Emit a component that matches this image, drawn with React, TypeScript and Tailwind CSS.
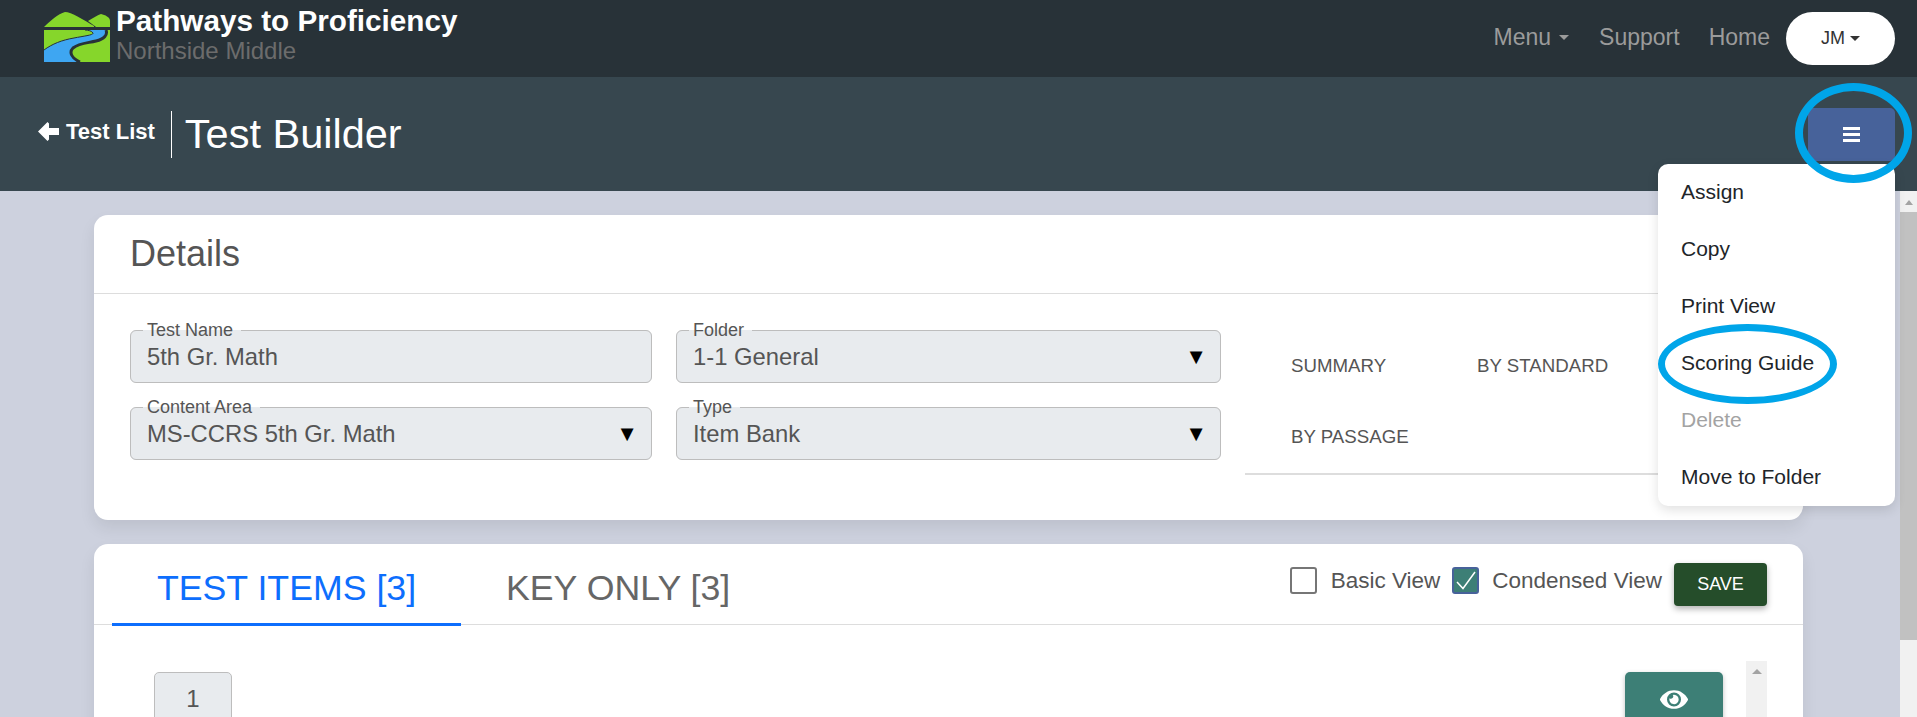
import { FaEye } from "react-icons/fa";

const font = "font-['Liberation_Sans',Arial,sans-serif]";

const Logo = () => (
  <svg width="66" height="50" viewBox="0 0 66 50" className="shrink-0">
    <path d="M0 15C6 9 14 2 21 0C27 0 40 8 50 14L50 15H0Z" fill="#86d62b" />
    <path d="M44 9C49 6 54 3 57 2C61 3 66 5 66 9V15H52Z" fill="#86d62b" />
    <path d="M0 18H66V50H0Z" fill="#86d62b" />
    <path
      d="M41 18H62C64 23 60 27 52 29C44 31 35 31 29 36C25 40 27 46 36 50H0V38C8 32 18 28 30 26C40 24 50 23 49 21C48 19 44 18 41 18Z"
      fill="#3ea6f2"
    />
    <path d="M62 18C64 23 60 27 52 29C44 31 35 31 29 36C25 40 27 46 36 50" fill="none" stroke="#283238" strokeWidth="3" />
    <path d="M0 38C8 32 18 28 30 26C40 24 50 23 49 21C48 19 44 18 41 18" fill="none" stroke="#283238" strokeWidth="1" />
  </svg>
);

const Caret = () => <span className="ml-2 w-0 h-0 border-x-[5px] border-x-transparent border-t-[5px] border-t-current" />;

const Field = ({ label, value, select }: { label: string; value: string; select?: boolean }) => (
  <fieldset className="h-[62px] border border-[#bdbdbd] rounded-[6px] bg-[#e8ebee] px-[16px] min-w-0">
    <legend className="-ml-[4px] pl-[4px] pr-[8px] text-[18px] leading-[18px] text-[#555]">{label}</legend>
    <div className="flex items-center justify-between h-[35px] text-[23.8px] text-[#555]">
      <span>{value}</span>
      {select && <span className="text-[#000] text-[22px] mr-[-3px]">▼</span>}
    </div>
  </fieldset>
);

const menuItems = ["Assign", "Copy", "Print View", "Scoring Guide", "Delete", "Move to Folder"];

export default function App() {
  return (
    <div className={`${font} relative w-[1917px] h-[717px] overflow-hidden bg-[#cdd1de]`}>
      <header className="h-[77px] bg-[#283238] flex items-center justify-between pl-[44px] pr-[22px]">
        <div className="flex items-start self-start pt-[4px]">
          <div className="pt-[8px]">
            <Logo />
          </div>
          <div className="ml-[6px]">
            <div className="text-[29.7px] leading-[34px] font-bold text-white">Pathways to Proficiency</div>
            <div className="text-[24px] leading-[25px] text-[#6c6c6c]">Northside Middle</div>
          </div>
        </div>
        <nav className="flex items-center text-[23px] text-[#9b9b9b]">
          <span className="flex items-center pb-[3px]">
            Menu
            <Caret />
          </span>
          <span className="ml-[30px] pb-[3px]">Support</span>
          <span className="ml-[29px] pb-[3px]">Home</span>
          <span className="ml-[16px] flex items-center justify-center w-[109px] h-[53px] rounded-full bg-white text-[18px] text-[#333]">
            JM
            <span className="ml-[5px] w-0 h-0 border-x-[5px] border-x-transparent border-t-[5px] border-t-current" />
          </span>
        </nav>
      </header>

      <div className="h-[114px] bg-[#37474f] flex items-center justify-between pl-[38px] pr-[22px]">
        <div className="flex items-center text-white">
          <svg width="21" height="19" viewBox="0 0 21 19" fill="white" className="mb-[5px]">
            <path d="M0 9.5L9.5 0L11 1.5V6H21V13H11V17.5L9.5 19Z" />
          </svg>
          <span className="ml-[7px] pb-[5px] text-[22px] font-bold">Test List</span>
          <span className="ml-[16px] w-px h-[47px] bg-white" />
          <span className="ml-[13px] text-[41.5px]">Test Builder</span>
        </div>
        <button className="w-[87px] h-[53px] rounded-[5px] bg-[#47629a] flex items-center justify-center">
          <svg width="17" height="15" viewBox="0 0 17 15" fill="white">
            <rect width="17" height="3" />
            <rect y="6" width="17" height="3" />
            <rect y="12" width="17" height="3" />
          </svg>
        </button>
      </div>

      <div className="flex h-[526px]">
        <main className="flex-1 min-w-0 pl-[94px] pr-[97px] pt-[24px]">
          <section className="h-[305px] bg-white rounded-[14px] shadow-[0_8px_16px_rgba(0,0,0,0.08)]">
            <h2 className="h-[79px] pl-[36px] flex items-center border-b border-[#ddd] text-[36px] text-[#555]">Details</h2>
            <div className="flex pl-[36px] pt-[27px]">
              <div className="grid grid-cols-[522px_545px] gap-x-[24px] gap-y-[15px] content-start">
                <Field label="Test Name" value="5th Gr. Math" />
                <Field label="Folder" value="1-1 General" select />
                <Field label="Content Area" value="MS-CCRS 5th Gr. Math" select />
                <Field label="Type" value="Item Bank" select />
              </div>
              <div className="ml-[24px] w-[558px] h-[154px] border-b-2 border-[#ddd] pl-[46px] pt-[10px] text-[18.7px] text-[#555]">
                <div className="flex h-[71px] items-center">
                  <span className="w-[186px]">SUMMARY</span>
                  <span>BY STANDARD</span>
                </div>
                <div className="flex h-[71px] items-center">BY PASSAGE</div>
              </div>
            </div>
          </section>

          <section className="mt-[24px] h-[200px] bg-white rounded-t-[14px] shadow-[0_8px_16px_rgba(0,0,0,0.08)]">
            <div className="relative h-[81px] flex border-b border-[#ddd] pl-[18px] pr-[36px]">
              <div className="w-[349px] h-[82px] border-b-[3px] border-[#0d6efd] flex items-center justify-center pt-[10px] text-[35.7px] text-[#0d6efd]">
                TEST ITEMS [3]
              </div>
              <div className="ml-[45px] h-[80px] flex items-center pt-[10px] text-[35.7px] text-[#666]">KEY ONLY [3]</div>
              <div className="ml-auto flex items-start pt-[19px] text-[22.5px] text-[#555]">
                <span className="mt-[4px] w-[27px] h-[27px] rounded-[3px] border-2 border-[#767676] bg-white" />
                <span className="ml-[14px] mt-[1px]">Basic View</span>
                <span className="ml-[12px] mt-[4px] w-[27px] h-[27px] rounded-[3px] border-2 border-[#47629a] bg-[#3d7f76] flex items-center justify-center">
                  <svg width="20" height="19" viewBox="0 0 20 19" fill="none" stroke="white" strokeWidth="1.5">
                    <path d="M1 11L7 17.5L19 1" />
                  </svg>
                </span>
                <span className="ml-[13px] mt-[1px]">Condensed View</span>
                <button className="ml-[12px] w-[93px] h-[43px] rounded-[4px] bg-[#254d2a] text-white text-[18px] shadow-[0_3px_6px_rgba(0,0,0,0.3)]">
                  SAVE
                </button>
              </div>
            </div>
            <div className="flex pl-[60px] pr-[36px] pt-[47px] relative">
              <div className="w-[78px] h-[60px] rounded-[5px] border border-[#bdbdbd] bg-[#e8ebee] flex items-center justify-center pb-[6px] text-[24px] text-[#555]">
                1
              </div>
              <div className="ml-auto mr-[44px] w-[98px] h-[60px] rounded-[5px] bg-[#3d7f76] flex items-start justify-center pt-[15px] text-white shadow-[0_2px_5px_rgba(0,0,0,0.25)]">
                <FaEye className="w-[28px] h-[25px]" />
              </div>
              <div className="absolute right-[36px] top-[36px] w-[21px] h-[70px] bg-[#f1f1f1] flex justify-center pt-[8px]">
                <span className="w-0 h-0 border-x-[5px] border-x-transparent border-b-[5px] border-b-[#a3a3a3]" />
              </div>
            </div>
          </section>
        </main>

        <aside className="w-[17px] bg-[#f1f1f1] flex flex-col items-center pt-[9px]">
          <span className="w-0 h-0 border-x-[4px] border-x-transparent border-b-[5px] border-b-[#a3a3a3]" />
          <span className="mt-[7px] w-full h-[428px] bg-[#c1c1c1]" />
        </aside>
      </div>

      <ul className="absolute left-[1658px] top-[164px] w-[237px] h-[342px] bg-white rounded-[10px] shadow-[0_4px_12px_rgba(0,0,0,0.12)] text-[21px] text-[#212529]">
        {menuItems.map((item) => (
          <li key={item} className={`h-[57px] flex items-center pl-[23px] pb-[2px] ${item === "Delete" ? "text-[#a3a3a3]" : ""}`}>
            {item}
          </li>
        ))}
      </ul>

      <div className="absolute left-[1795px] top-[83px] w-[117px] h-[100px] rounded-[50%] border-[8px] border-[#00a5e9]" />
      <div className="absolute left-[1658px] top-[324px] w-[179px] h-[80px] rounded-[50%] border-[7px] border-[#00a5e9]" />
    </div>
  );
}
